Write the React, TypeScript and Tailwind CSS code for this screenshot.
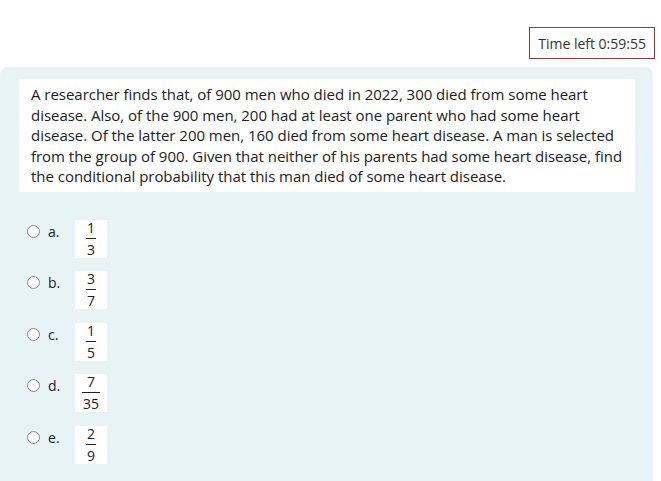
export default function App() {
    const options = [
        { key: 'a', num: '1', den: '3' },
        { key: 'b', num: '3', den: '7' },
        { key: 'c', num: '1', den: '5' },
        { key: 'd', num: '7', den: '35' },
        { key: 'e', num: '2', den: '9' },
    ]

    return (
        <div className="w-[661px] h-[481px] bg-white overflow-hidden font-['Open_Sans',sans-serif] text-[#1d2125]">
            {/* Timer */}
            <div className="flex justify-end pt-[27px] pr-[6px] h-[67px]">
                <div className="h-[32px] px-[8px] flex items-center border border-[#8a3b3b] text-[14px] text-[#333]">
                    Time left 0:59:55
                </div>
            </div>

            {/* Question panel */}
            <div className="w-[653px] h-[414px] bg-[#e7f3f5] rounded-t-[8px] pt-[12px] pl-[19px] pr-[18px]">
                <div className="bg-white pl-[12px] pr-[6px] py-[5px] text-[15px] leading-[20.5px] tracking-[-0.03px]">
                    A researcher finds that, of 900 men who died in 2022, 300 died from some heart disease. Also, of the 900 men, 200 had at least one parent who had some heart disease. Of the latter 200 men, 160 died from some heart disease. A man is selected from the group of 900. Given that neither of his parents had some heart disease, find the conditional probability that this man died of some heart disease.
                </div>

                <div className="flex flex-col gap-[13.5px] mt-[28px] pl-[8px]">
                    {options.map((o) => (
                        <div key={o.key} className="flex items-start">
                            <div className="w-[13px] h-[13px] mt-[5px] rounded-full border border-[#8a8a8a] bg-white" />
                            <span className="ml-[8px] w-[27px] text-[14px] leading-[24px]">{o.key}.</span>
                            <div className="bg-white min-w-[32px] h-[38px] px-[7px] flex justify-center">
                                <div className="flex flex-col items-center text-[14px] leading-[16px]">
                                    <span className="px-[1px]">{o.num}</span>
                                    <span className="h-px w-full bg-[#222] mt-[2px] mb-[3px]" />
                                    <span className="px-[1px]">{o.den}</span>
                                </div>
                            </div>
                        </div>
                    ))}
                </div>
            </div>
        </div>
    )
}
